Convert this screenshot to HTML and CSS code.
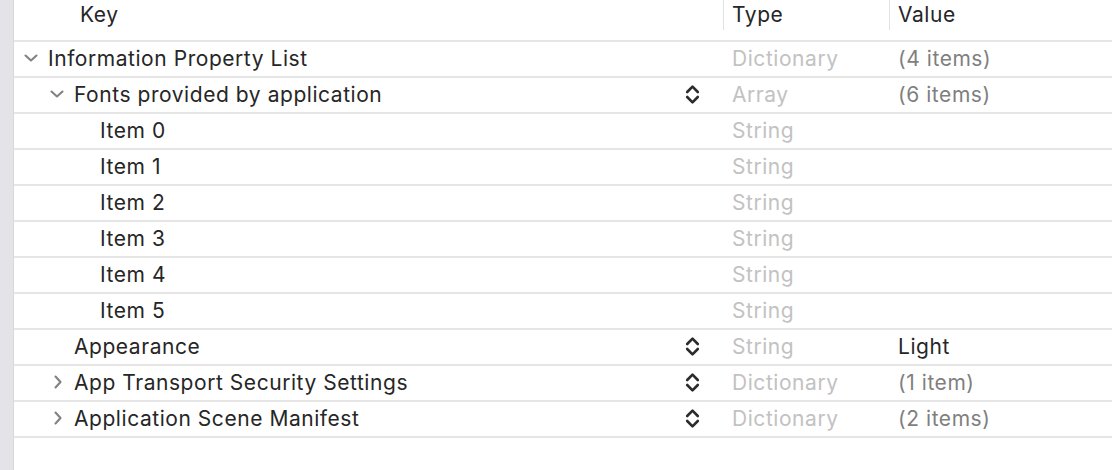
FILE: index.html
```html
<!DOCTYPE html>
<html>
<head>
<meta charset="utf-8">
<link rel="stylesheet" href="styles.css">
</head>
<body>
<div class="window">
  <div class="strip"></div>
  <div class="table">
    <div class="header">
      <div class="hcell key">Key</div>
      <div class="hcell sep type">Type</div>
      <div class="hcell sep value">Value</div>
    </div>

    <div class="row">
      <div class="cell key l0"><span class="disc"><svg width="14" height="8" viewBox="0 0 14 8"><path d="M1.5 1.5 L7 6.5 L12.5 1.5" fill="none" stroke="#828282" stroke-width="2.1" stroke-linecap="round" stroke-linejoin="round"/></svg></span><span class="name">Information Property List</span></div>
      <div class="cell type">Dictionary</div>
      <div class="cell value muted">(4 items)</div>
    </div>

    <div class="row">
      <div class="cell key l1"><span class="disc"><svg width="14" height="8" viewBox="0 0 14 8"><path d="M1.5 1.5 L7 6.5 L12.5 1.5" fill="none" stroke="#828282" stroke-width="2.1" stroke-linecap="round" stroke-linejoin="round"/></svg></span><span class="name">Fonts provided by application</span><span class="stepper"><svg width="15" height="21" viewBox="0 0 15 21"><path d="M2.2 8 L7.5 2.7 L12.8 8 M2.2 13 L7.5 18.3 L12.8 13" fill="none" stroke="#2b2b2b" stroke-width="2.6" stroke-linecap="round" stroke-linejoin="round"/></svg></span></div>
      <div class="cell type">Array</div>
      <div class="cell value muted">(6 items)</div>
    </div>

    <div class="row"><div class="cell key l2"><span class="name">Item 0</span></div><div class="cell type">String</div><div class="cell value"></div></div>
    <div class="row"><div class="cell key l2"><span class="name">Item 1</span></div><div class="cell type">String</div><div class="cell value"></div></div>
    <div class="row"><div class="cell key l2"><span class="name">Item 2</span></div><div class="cell type">String</div><div class="cell value"></div></div>
    <div class="row"><div class="cell key l2"><span class="name">Item 3</span></div><div class="cell type">String</div><div class="cell value"></div></div>
    <div class="row"><div class="cell key l2"><span class="name">Item 4</span></div><div class="cell type">String</div><div class="cell value"></div></div>
    <div class="row"><div class="cell key l2"><span class="name">Item 5</span></div><div class="cell type">String</div><div class="cell value"></div></div>

    <div class="row">
      <div class="cell key l1"><span class="disc"></span><span class="name">Appearance</span><span class="stepper"><svg width="15" height="21" viewBox="0 0 15 21"><path d="M2.2 8 L7.5 2.7 L12.8 8 M2.2 13 L7.5 18.3 L12.8 13" fill="none" stroke="#2b2b2b" stroke-width="2.6" stroke-linecap="round" stroke-linejoin="round"/></svg></span></div>
      <div class="cell type">String</div>
      <div class="cell value">Light</div>
    </div>

    <div class="row">
      <div class="cell key l1"><span class="disc right"><svg width="10" height="14" viewBox="0 0 10 14"><path d="M2.5 1.5 L7.5 7 L2.5 12.5" fill="none" stroke="#828282" stroke-width="2.1" stroke-linecap="round" stroke-linejoin="round"/></svg></span><span class="name">App Transport Security Settings</span><span class="stepper"><svg width="15" height="21" viewBox="0 0 15 21"><path d="M2.2 8 L7.5 2.7 L12.8 8 M2.2 13 L7.5 18.3 L12.8 13" fill="none" stroke="#2b2b2b" stroke-width="2.6" stroke-linecap="round" stroke-linejoin="round"/></svg></span></div>
      <div class="cell type">Dictionary</div>
      <div class="cell value muted">(1 item)</div>
    </div>

    <div class="row">
      <div class="cell key l1"><span class="disc right"><svg width="10" height="14" viewBox="0 0 10 14"><path d="M2.5 1.5 L7.5 7 L2.5 12.5" fill="none" stroke="#828282" stroke-width="2.1" stroke-linecap="round" stroke-linejoin="round"/></svg></span><span class="name">Application Scene Manifest</span><span class="stepper"><svg width="15" height="21" viewBox="0 0 15 21"><path d="M2.2 8 L7.5 2.7 L12.8 8 M2.2 13 L7.5 18.3 L12.8 13" fill="none" stroke="#2b2b2b" stroke-width="2.6" stroke-linecap="round" stroke-linejoin="round"/></svg></span></div>
      <div class="cell type">Dictionary</div>
      <div class="cell value muted">(2 items)</div>
    </div>
  </div>
</div>
</body>
</html>
```

FILE: styles.css
```css
* { box-sizing: border-box; }
html, body {
  margin: 0;
  padding: 0;
  background: #ffffff;
}
body {
  font-family: Inter, "Liberation Sans", sans-serif;
  font-size: 21px;
  letter-spacing: 0.55px;
  color: #262626;
  width: 1112px;
  height: 470px;
  overflow: hidden;
}
.window {
  display: flex;
  height: 470px;
}
.strip {
  width: 14px;
  flex: none;
  background: #e4e3e8;
  border-right: 1px solid #d8d7dc;
}
.table {
  flex: 1;
  display: flex;
  flex-direction: column;
}
.header {
  display: grid;
  grid-template-columns: 709px 166px 1fr;
  height: 42px;
  border-bottom: 2px solid #e6e6e6;
  align-items: start;
}
.hcell {
  height: 30px;
  line-height: 30px;
  color: #262626;
}
.hcell.key { padding-left: 66px; }
.hcell.sep {
  border-left: 1px solid #e2e2e2;
  padding-left: 8px;
}
.row {
  display: grid;
  grid-template-columns: 709px 166px 1fr;
  height: 36px;
  border-bottom: 2px solid #e6e6e6;
  align-items: center;
}
.cell {
  display: flex;
  align-items: center;
  height: 34px;
  padding-bottom: 2px;
  white-space: nowrap;
}
.cell.key { padding-right: 23px; }
.cell.key.l0 { padding-left: 8px; }
.cell.key.l1 { padding-left: 34px; }
.cell.key.l2 { padding-left: 86px; }
.disc {
  width: 26px;
  flex: none;
  display: flex;
  align-items: center;
  padding-left: 2px;
}
.disc.right { padding-left: 5px; }
.disc svg { display: block; }
.name { flex: 1; }
.stepper {
  flex: none;
  display: flex;
  align-items: center;
}
.stepper svg { display: block; }
.cell.type {
  padding-left: 9px;
  color: #c2c2c2;
}
.cell.value {
  padding-left: 9px;
  color: #262626;
}
.cell.value.muted { color: #7f7f7f; }
```
